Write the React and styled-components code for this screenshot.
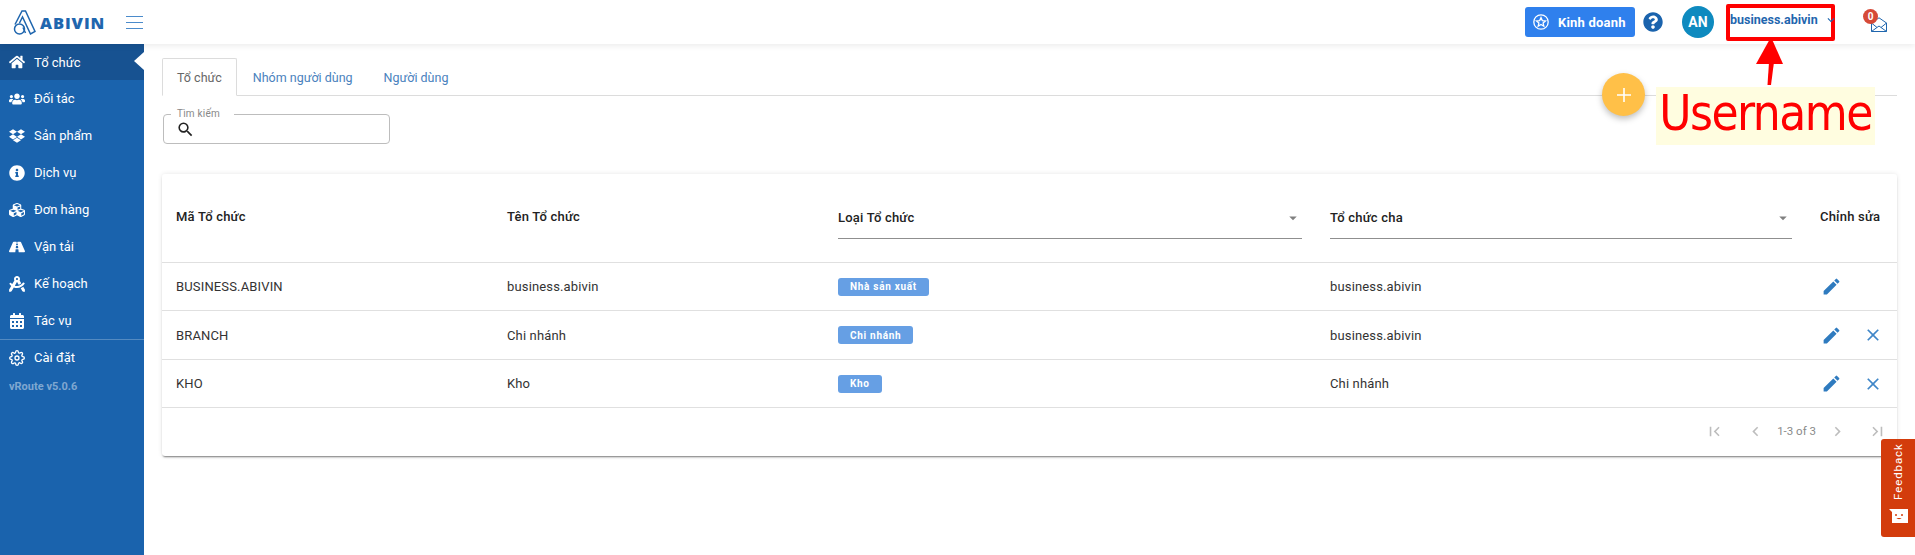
import React from "react";
import styled, { createGlobalStyle } from "styled-components";
import { FaHome, FaUsers, FaDropbox, FaInfoCircle, FaCubes, FaRoad, FaDraftingCompass, FaCalendarAlt, FaQuestionCircle } from "react-icons/fa";
import { FiSettings } from "react-icons/fi";
import { MdEdit, MdClose, MdFirstPage, MdLastPage, MdChevronLeft, MdChevronRight, MdSearch, MdArrowDropDown, MdKeyboardArrowDown } from "react-icons/md";

const Global = createGlobalStyle`
  html, body { margin: 0; padding: 0; background: #fff; font-family: Roboto, "Noto Sans", sans-serif; overflow: hidden; }
  * { box-sizing: border-box; }
`;

const Page = styled.div`
  width: 1915px; height: 555px; display: flex; flex-direction: column; position: relative; overflow: hidden; background: #fff;
`;
const Topbar = styled.header`
  height: 44px; flex: none; display: flex; align-items: center; background: #fff;
  box-shadow: 0 2px 6px rgba(0,0,0,.08); position: relative; z-index: 2;
`;
const Logo = styled.div`
  width: 126px; padding-left: 13px; display: flex; align-items: center; gap: 4px; color: #1f66ae;
`;
const LogoText = styled.span`
  font-size: 16.5px; font-weight: 800; letter-spacing: .9px; font-family: "Open Sans", Roboto, sans-serif;
`;
const Burger = styled.div`
  width: 17px; height: 13px; display: flex; flex-direction: column; justify-content: space-between;
  span { display: block; height: 1px; background: #4b8bcb; }
`;
const TopRight = styled.div`
  margin-left: auto; display: flex; align-items: center; height: 100%; padding-right: 28px;
`;
const BizButton = styled.button`
  width: 110px; height: 30px; border: 0; border-radius: 3px; background: #2f80ed; color: #fff; padding: 0 0 0 8px;
  display: flex; align-items: center; gap: 9px; font: 700 13px Roboto, sans-serif; letter-spacing: .2px;
`;
const Help = styled.span`
  margin-left: 8px; color: #1a63ad; font-size: 20px; display: flex;
`;
const Avatar = styled.span`
  margin-left: 19px; width: 32px; height: 32px; border-radius: 50%; background: #0e8abf; color: #fff;
  display: flex; align-items: center; justify-content: center; font-size: 14px; font-weight: 700;
`;
const User = styled.div`
  margin-left: 12px; width: 109px; height: 37px; border: 4px solid #f00; border-radius: 2px; display: flex; align-items: center;
  color: #1f66ae; font-size: 12.5px; font-weight: 700; padding-bottom: 5px; white-space: nowrap; position: relative;
  svg { position: absolute; left: 94px; top: 5px; font-size: 14px; color: #1f66ae; }
`;
const Mail = styled.div`
  margin-left: 36px; width: 16px; height: 15px; position: relative; color: #1f66ae; margin-top: 4px;
  svg { display: block; }
`;
const Badge = styled.span`
  position: absolute; left: -8px; top: -8px; width: 15px; height: 15px; border-radius: 50%; background: #d64a38; color: #fff;
  font-size: 10px; font-weight: 700; display: flex; align-items: center; justify-content: center;
`;
const Body = styled.div`
  flex: 1; display: flex; min-height: 0;
`;
const Sidebar = styled.nav`
  width: 144px; flex: none; background: #1a63ad; color: #fff;
`;
const NavItem = styled.div`
  height: ${p => p.$h}px; display: flex; align-items: center; position: relative; font-size: 13px;
  background: ${p => (p.$active ? "#175291" : "transparent")};
  ${p => p.$active && `&::after { content: ""; position: absolute; right: 0; top: 8px; border: 9px solid transparent; border-left-width: 0; border-right: 10px solid #fff; }`}
`;
const NavIcon = styled.span`
  width: 34px; flex: none; display: flex; justify-content: center; font-size: 16px;
`;
const NavDivider = styled.div`
  height: 1px; background: rgba(255,255,255,.25);
`;
const Version = styled.div`
  padding: 5px 0 0 9px; font-size: 11px; font-weight: 700; color: rgba(255,255,255,.45);
`;
const Main = styled.main`
  flex: 1; min-width: 0; padding: 14px 18px 0 18px; position: relative;
`;
const Tabs = styled.div`
  display: flex; height: 38px; border-bottom: 1px solid #dcdcdc;
`;
const Tab = styled.div`
  height: 38px; padding: 0 15px; display: flex; align-items: center; font-size: 12.5px; margin-right: 1px;
  color: ${p => (p.$active ? "#666" : "#4a82bd")};
  ${p => p.$active && `border: 1px solid #dcdcdc; border-bottom: 1px solid #fff; border-radius: 2px 2px 0 0; padding: 0 14px;`}
`;
const SearchField = styled.fieldset`
  margin: 13px 0 0 1px; width: 227px; height: 35px; border: 1px solid #bdbdbd; border-radius: 4px; padding: 0 0 0 12px;
  display: flex; align-items: center; position: relative;
  legend { font-size: 10px; color: #888; padding: 0 14px 0 6px; margin-left: -5px; line-height: 10px; letter-spacing: .2px; }
  svg { font-size: 19px; color: #222; margin-top: -3px; }
`;
const Card = styled.section`
  margin-top: 30px; background: #fff; border-radius: 3px;
  box-shadow: 0 2px 2px -1px rgba(0,0,0,.5), 0 0 5px rgba(0,0,0,.1);
`;
const Row = styled.div`
  display: grid; grid-template-columns: 331px 331px 492px 490px 91px; align-items: center;
  height: ${p => p.$h}px; border-bottom: 1px solid #e0e0e0; font-size: 13px; color: #333; letter-spacing: .15px;
`;
const Cell = styled.div`
  padding-left: 14px; display: flex; align-items: center; min-width: 0;
`;
const HeadCell = styled(Cell)`
  font-weight: 500; color: #222; margin-top: -3px; letter-spacing: .2px;
`;
const SelectCell = styled.div`
  align-self: start; margin: 25px 14px 0; height: 40px; padding-bottom: 2px; border-bottom: 1px solid #8f8f8f; display: flex; align-items: center; justify-content: space-between;
  font-weight: 500; color: #222; font-size: 13px; letter-spacing: .2px;
  svg { color: #808080; font-size: 18px; }
`;
const Chip = styled.span`
  background: #669fe4; color: #fff; border-radius: 3px; height: 18px; padding: 0 12px; display: flex; align-items: center;
  font-size: 10px; font-weight: 700; letter-spacing: .7px;
`;
const Actions = styled.div`
  padding-left: 15px; display: flex; align-items: center; gap: 21px;
`;
const EditBtn = styled(MdEdit)` color: #2f7bbf; font-size: 21px; `;
const CloseBtn = styled(MdClose)` color: #3f86c8; font-size: 20px; `;
const Pager = styled.div`
  height: 48px; display: flex; align-items: center; justify-content: flex-end; padding-right: 10px; color: #bdbdbd; font-size: 19px; padding-bottom: 2px;
`;
const PageBtn = styled.span`
  display: flex; margin-left: ${p => p.$ml || 0}px;
`;
const PageText = styled.span`
  font-size: 11.5px; color: #8a8a8a; margin: 0 12px;
`;
const Fab = styled.button`
  position: absolute; left: 1458px; top: 29px; width: 43px; height: 43px; border-radius: 50%; border: 0; background: #ffc048; color: #fff;
  box-shadow: 0 3px 6px rgba(0,0,0,.25); padding: 0; display: flex; align-items: center; justify-content: center;
`;
const Annotation = styled.div`
  position: absolute; left: 1512px; top: 43px; width: 219px; height: 58px; background: #fffde0; color: #f00;
  font: 49px/53px "DejaVu Sans Condensed", "Liberation Sans", sans-serif; text-align: center; letter-spacing: -1.5px; white-space: nowrap;
`;
const Arrow = styled.svg`
  position: absolute; left: 1755px; top: 36px; z-index: 3;
`;
const Feedback = styled.div`
  position: absolute; right: 0; top: 439px; width: 34px; height: 98px; background: #d33c0c; color: #fff; border-radius: 3px 0 0 3px; z-index: 4;
  display: flex; flex-direction: column; align-items: center; padding-top: 10px; gap: 9px;
`;
const FeedbackText = styled.span`
  writing-mode: vertical-rl; transform: rotate(180deg); font-size: 11.5px; font-weight: 400; letter-spacing: .9px; height: 51px; line-height: 12px;
`;

const nav = [
  [FaHome, "Tổ chức", true], [FaUsers, "Đối tác"], [FaDropbox, "Sản phẩm"], [FaInfoCircle, "Dịch vụ"],
  [FaCubes, "Đơn hàng"], [FaRoad, "Vận tải"], [FaDraftingCompass, "Kế hoạch"], [FaCalendarAlt, "Tác vụ"],
];
const rows = [
  ["BUSINESS.ABIVIN", "business.abivin", "Nhà sản xuất", "business.abivin", false, 48],
  ["BRANCH", "Chi nhánh", "Chi nhánh", "business.abivin", true, 49],
  ["KHO", "Kho", "Kho", "Chi nhánh", true, 48],
];

export default function App() {
  return (
    <Page>
      <Global />
      <Topbar>
        <Logo>
          <svg width="23" height="25" viewBox="0 0 23 25" fill="none" stroke="#1f66ae" strokeWidth="1.5">
            <path d="M2 14.5 L9 1 H12.5 L22 21.5 L17.5 24 L9.5 7 L6.5 13" />
            <path d="M12.5 23 L10 17.5" />
            <circle cx="6.5" cy="19" r="5" />
          </svg>
          <LogoText>ABIVIN</LogoText>
        </Logo>
        <Burger><span /><span /><span /></Burger>
        <TopRight>
          <BizButton>
            <svg width="16" height="16" viewBox="0 0 16 16" fill="none" stroke="#fff" strokeWidth="1.3">
              <circle cx="8" cy="8" r="7.2" />
              <path d="M8 3.6l1.3 3 3.2.3-2.4 2.1.7 3.2L8 10.5l-2.8 1.7.7-3.2-2.4-2.1 3.2-.3z" />
            </svg>
            Kinh doanh
          </BizButton>
          <Help><FaQuestionCircle /></Help>
          <Avatar>AN</Avatar>
          <User>business.abivin<MdKeyboardArrowDown /></User>
          <Mail>
            <svg width="16" height="15" viewBox="0 0 16 15" fill="none" stroke="currentColor" strokeWidth="1">
              <path d="M.5 6 8 .8 15.5 6v8.5H.5z" />
              <path d="M.5 14.5 8 9l7.5 5.5M.5 6 6 10.5M15.5 6 10 10.5" />
            </svg>
            <Badge>0</Badge>
          </Mail>
        </TopRight>
      </Topbar>
      <Body>
        <Sidebar>
          {nav.map(([Icon, label, active]) => (
            <NavItem key={label} $active={active} $h={active ? 36 : 37}><NavIcon><Icon /></NavIcon>{label}</NavItem>
          ))}
          <NavDivider />
          <NavItem $h={35}><NavIcon><FiSettings /></NavIcon>Cài đặt</NavItem>
          <Version>vRoute v5.0.6</Version>
        </Sidebar>
        <Main>
          <Tabs>
            <Tab $active>Tổ chức</Tab>
            <Tab>Nhóm người dùng</Tab>
            <Tab>Người dùng</Tab>
          </Tabs>
          <SearchField>
            <legend>Tìm kiếm</legend>
            <MdSearch />
          </SearchField>
          <Card>
            <Row $h={89}>
              <HeadCell>Mã Tổ chức</HeadCell>
              <HeadCell>Tên Tổ chức</HeadCell>
              <SelectCell>Loại Tổ chức<MdArrowDropDown /></SelectCell>
              <SelectCell>Tổ chức cha<MdArrowDropDown /></SelectCell>
              <HeadCell>Chỉnh sửa</HeadCell>
            </Row>
            {rows.map(r => (
              <Row key={r[0]} $h={r[5]}>
                <Cell>{r[0]}</Cell>
                <Cell>{r[1]}</Cell>
                <Cell><Chip>{r[2]}</Chip></Cell>
                <Cell>{r[3]}</Cell>
                <Actions><EditBtn />{r[4] && <CloseBtn />}</Actions>
              </Row>
            ))}
            <Pager>
              <PageBtn><MdFirstPage /></PageBtn>
              <PageBtn $ml={22}><MdChevronLeft /></PageBtn>
              <PageText>1-3 of 3</PageText>
              <PageBtn><MdChevronRight /></PageBtn>
              <PageBtn $ml={21}><MdLastPage /></PageBtn>
            </Pager>
          </Card>
          <Fab>
            <svg width="16" height="16" viewBox="0 0 16 16" stroke="#fff" strokeWidth="1.6"><path d="M8 1v14M1 8h14" /></svg>
          </Fab>
          <Annotation>Username</Annotation>
        </Main>
      </Body>
      <Arrow width="32" height="50" viewBox="0 0 32 50" fill="#f00">
        <path d="M16 1 L28 28 L1 28 Z" />
        <path d="M14 26 L19 26 L16 49 L12.5 49 Z" />
      </Arrow>
      <Feedback>
        <FeedbackText>Feedback</FeedbackText>
        <svg width="19" height="14" viewBox="0 0 19 14" fill="#fff">
          <path d="M0 0H19V14H3V3Z" />
          <circle cx="7" cy="6" r="1" fill="#d33c0c" />
          <circle cx="13" cy="6" r="1" fill="#d33c0c" />
          <path d="M7.5 9h5c-1 1.5-4 1.5-5 0z" fill="#d33c0c" />
        </svg>
      </Feedback>
    </Page>
  );
}
